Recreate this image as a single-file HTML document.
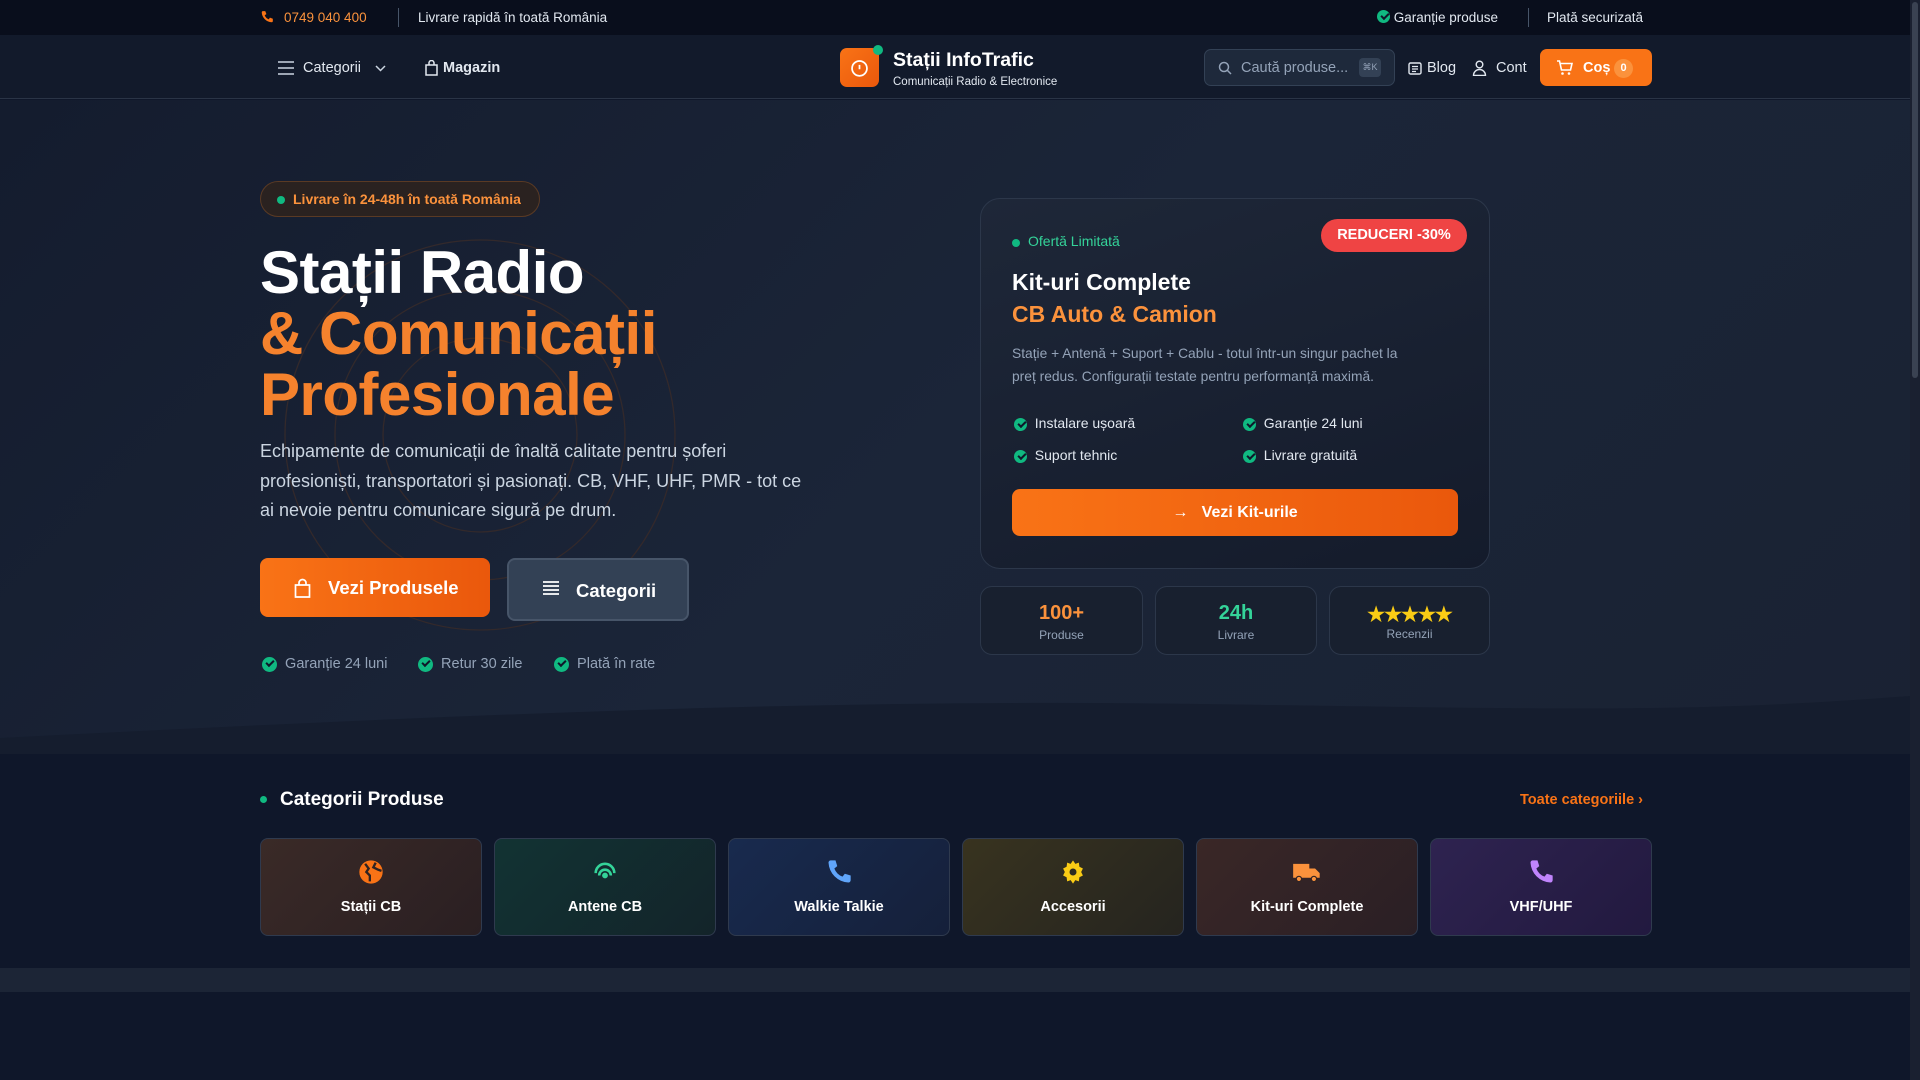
<!DOCTYPE html>
<html><head><meta charset="utf-8"><style>
*{box-sizing:border-box;margin:0;padding:0}
body{width:1920px;height:1080px;overflow:hidden;background:#0f172a;font-family:"Liberation Sans",sans-serif;color:#fff;position:relative}
.abs{position:absolute}
.top{left:0;top:0;width:1910px;height:35px;background:#090e1c;font-size:13.5px;color:#e2e8f0}
.nav{left:0;top:35px;width:1910px;height:64px;background:#121a2b;border-bottom:1px solid #2a3446}
.hero{left:0;top:100px;width:1910px;height:654px;background:linear-gradient(135deg,#141c2e 0%,#1b2538 50%,#1a2233 100%);overflow:hidden}
.sb{left:1910px;top:0;width:10px;height:1080px;background:#1a2030}
.sb i{position:absolute;left:2px;top:2px;width:6px;height:376px;background:#3a4252;border-radius:3px}
.chk{display:inline-block;width:15px;height:15px;border-radius:50%;background:#10b981;position:relative;vertical-align:middle}
.chk:after{content:"";position:absolute;left:4px;top:3px;width:6px;height:3px;border-left:2px solid #0f172a;border-bottom:2px solid #0f172a;transform:rotate(-45deg)}
.card{border:1px solid #2c374a;border-radius:20px;background:linear-gradient(160deg,#1e2738,#141b2b)}
.stat{top:586px;height:69px;border:1px solid #2c374a;border-radius:12px;background:#18202f;text-align:center}
.stat b{display:block;font-size:20px;margin-top:15px}
.stat span{display:block;font-size:12px;color:#94a3b8;margin-top:3px}
.cat{top:838px;width:222px;height:98px;border:1px solid #2f3a4e;border-radius:8px;text-align:center;font-size:14.5px;font-weight:bold}
.cat svg{display:block;margin:19px auto 13px}
</style></head><body>
<div class="abs top">
  <svg class="abs" style="left:260px;top:10px" width="14" height="14" viewBox="0 0 24 24"><path d="M5 2h4l2 5-3 2a12 12 0 0 0 7 7l2-3 5 2v4a2 2 0 0 1-2 2A18 18 0 0 1 3 4a2 2 0 0 1 2-2" fill="#f97316"/></svg>
  <span class="abs" style="left:284px;top:10px;color:#fb923c">0749 040 400</span>
  <span class="abs" style="left:398px;top:8px;width:1px;height:19px;background:#475569"></span>
  <span class="abs" style="left:418px;top:10px">Livrare rapidă în toată România</span>
  <span class="abs" style="left:1377px;top:10px"><span class="chk" style="width:13px;height:13px;margin-top:-3px"></span> Garanție produse</span>
  <span class="abs" style="left:1528px;top:8px;width:1px;height:19px;background:#475569"></span>
  <span class="abs" style="left:1547px;top:10px">Plată securizată</span>
</div>
<div class="abs nav">
  <svg class="abs" style="left:278px;top:26px" width="16" height="14" viewBox="0 0 16 14"><path d="M0 1h16M0 7h16M0 13h16" stroke="#cbd5e1" stroke-width="1.6"/></svg>
  <span class="abs" style="left:303px;top:25px;font-size:14.5px;color:#e2e8f0">Categorii</span>
  <svg class="abs" style="left:375px;top:30px" width="11" height="7" viewBox="0 0 11 7"><path d="M1 1l4.5 4.5L10 1" stroke="#cbd5e1" stroke-width="1.5" fill="none"/></svg>
  <svg class="abs" style="left:425px;top:25px" width="13" height="16" viewBox="0 0 13 16"><path d="M1 5h11v10H1zM4 5V3a2.5 2.5 0 0 1 5 0v2" stroke="#e2e8f0" stroke-width="1.5" fill="none"/></svg>
  <span class="abs" style="left:443px;top:25px;font-size:14.5px;font-weight:bold;color:#e2e8f0">Magazin</span>
  <div class="abs" style="left:840px;top:13px;width:39px;height:39px;border-radius:7px;background:linear-gradient(135deg,#f97316,#ea580c)"></div>
  <svg class="abs" style="left:849px;top:22px" width="21" height="21" viewBox="0 0 24 24"><circle cx="12" cy="13" r="8.5" stroke="#fff" stroke-width="2" fill="none"/><path d="M12 9v5" stroke="#fff" stroke-width="2"/></svg>
  <div class="abs" style="left:873px;top:10px;width:10px;height:10px;border-radius:50%;background:#10b981"></div>
  <span class="abs" style="left:893px;top:14px;font-size:19.5px;font-weight:bold">Stații InfoTrafic</span>
  <span class="abs" style="left:893px;top:41px;font-size:11.5px;color:#e2e8f0">Comunicații Radio &amp; Electronice</span>
  <div class="abs" style="left:1204px;top:14px;width:191px;height:37px;border:1px solid #334155;border-radius:7px;background:#1e293b"></div>
  <svg class="abs" style="left:1218px;top:26px" width="14" height="14" viewBox="0 0 14 14"><circle cx="6" cy="6" r="4.5" stroke="#94a3b8" stroke-width="1.5" fill="none"/><path d="M9.5 9.5L13 13" stroke="#94a3b8" stroke-width="1.5"/></svg>
  <span class="abs" style="left:1241px;top:25px;font-size:14.5px;color:#94a3b8">Caută produse...</span>
  <span class="abs" style="left:1359px;top:23px;width:22px;height:19px;border-radius:4px;background:#334155;font-size:9px;color:#94a3b8;text-align:center;line-height:19px">⌘K</span>
  <svg class="abs" style="left:1408px;top:27px" width="14" height="13" viewBox="0 0 14 13"><rect x="1" y="1" width="12" height="11" rx="1.5" stroke="#e2e8f0" stroke-width="1.4" fill="none"/><path d="M4 4.5h6M4 7h6M4 9.5h4" stroke="#e2e8f0" stroke-width="1.2"/></svg>
  <span class="abs" style="left:1427px;top:25px;font-size:14.5px;color:#e2e8f0">Blog</span>
  <svg class="abs" style="left:1472px;top:25px" width="15" height="16" viewBox="0 0 15 16"><circle cx="7.5" cy="4.5" r="3.3" stroke="#e2e8f0" stroke-width="1.4" fill="none"/><path d="M1.5 15.5a6 6 0 0 1 12 0z" stroke="#e2e8f0" stroke-width="1.4" fill="none"/></svg>
  <span class="abs" style="left:1496px;top:25px;font-size:14.5px;color:#e2e8f0">Cont</span>
  <div class="abs" style="left:1540px;top:14px;width:112px;height:37px;border-radius:7px;background:#f97316"></div>
  <svg class="abs" style="left:1556px;top:25px" width="17" height="16" viewBox="0 0 17 16"><path d="M1 1h2.5l2 9h9l1.5-6.5H4.3" stroke="#fff" stroke-width="1.6" fill="none"/><circle cx="6.5" cy="13.5" r="1.3" fill="#fff"/><circle cx="13" cy="13.5" r="1.3" fill="#fff"/></svg>
  <span class="abs" style="left:1583px;top:25px;font-size:14.5px;font-weight:bold">Coș</span>
  <span class="abs" style="left:1614px;top:24px;width:19px;height:19px;border-radius:50%;background:#fb923c;font-size:11px;text-align:center;line-height:19px;font-weight:bold">0</span>
</div>
<div class="abs hero">
  <svg class="abs" style="left:280px;top:135px" width="400" height="400" viewBox="0 0 400 400"><g fill="none" stroke="#33292b" stroke-width="1.3"><circle cx="200" cy="200" r="195"/><circle cx="200" cy="200" r="145"/><circle cx="200" cy="200" r="97"/></g></svg>
  <div class="abs" style="left:260px;top:81px;width:280px;height:36px;border:1px solid #5a3a24;border-radius:18px;background:#2a2220"></div>
  <span class="abs" style="left:277px;top:96px;width:8px;height:8px;border-radius:50%;background:#10b981"></span>
  <span class="abs" style="left:293px;top:91px;font-size:14px;font-weight:bold;color:#fb923c">Livrare în 24-48h în toată România</span>
  <div class="abs" style="left:260px;top:142px;font-size:60px;font-weight:bold;line-height:61px;letter-spacing:-0.5px">Stații Radio<br><span style="color:#f5822d">&amp; Comunicații<br>Profesionale</span></div>
  <div class="abs" style="left:260px;top:337px;white-space:nowrap;font-size:18px;line-height:29.5px;color:#cbd5e1">Echipamente de comunicații de înaltă calitate pentru șoferi<br>profesioniști, transportatori și pasionați. CB, VHF, UHF, PMR - tot ce<br>ai nevoie pentru comunicare sigură pe drum.</div>
  <div class="abs" style="left:260px;top:458px;width:230px;height:59px;border-radius:8px;background:linear-gradient(90deg,#f97316,#ea580c)"></div>
  <svg class="abs" style="left:294px;top:478px" width="17" height="20" viewBox="0 0 17 20"><path d="M1.5 7h14v12h-14zM5 7V5a3.5 3.5 0 0 1 7 0v2" stroke="#fff" stroke-width="1.7" fill="none"/></svg>
  <span class="abs" style="left:328px;top:477px;font-size:18.5px;font-weight:bold">Vezi Produsele</span>
  <div class="abs" style="left:507px;top:458px;width:182px;height:63px;border:2px solid #475569;border-radius:8px;background:#334155"></div>
  <svg class="abs" style="left:543px;top:481px" width="16" height="14" viewBox="0 0 16 14"><path d="M0 1h16M0 5h16M0 9h16M0 13h16" stroke="#fff" stroke-width="1.7"/></svg>
  <span class="abs" style="left:576px;top:480px;font-size:18.5px;font-weight:bold">Categorii</span>
  <span class="abs" style="left:262px;top:556px;font-size:14.5px;color:#94a3b8"><span class="chk"></span>&nbsp; Garanție 24 luni</span>
  <span class="abs" style="left:418px;top:556px;font-size:14.5px;color:#94a3b8"><span class="chk"></span>&nbsp; Retur 30 zile</span>
  <span class="abs" style="left:554px;top:556px;font-size:14.5px;color:#94a3b8"><span class="chk"></span>&nbsp; Plată în rate</span>

  <div class="abs card" style="left:980px;top:98px;width:510px;height:371px"></div>
  <span class="abs" style="left:1012px;top:139px;width:8px;height:8px;border-radius:50%;background:#10b981"></span>
  <span class="abs" style="left:1028px;top:133px;font-size:14px;color:#34d399">Ofertă Limitată</span>
  <div class="abs" style="left:1321px;top:119px;width:146px;height:33px;border-radius:17px;background:#ef4444;font-size:14.5px;font-weight:bold;text-align:center;line-height:33px">REDUCERI -30%</div>
  <span class="abs" style="left:1012px;top:169px;font-size:23px;font-weight:bold">Kit-uri Complete</span>
  <span class="abs" style="left:1012px;top:201px;font-size:23px;font-weight:bold;color:#fb923c">CB Auto &amp; Camion</span>
  <div class="abs" style="left:1012px;top:242px;white-space:nowrap;font-size:13.8px;line-height:23px;color:#94a3b8">Stație + Antenă + Suport + Cablu - totul într-un singur pachet la<br>preț redus. Configurații testate pentru performanță maximă.</div>
  <span class="abs" style="left:1014px;top:315px;font-size:14px;color:#e2e8f0"><span class="chk" style="width:13px;height:13px"></span>&nbsp; Instalare ușoară</span>
  <span class="abs" style="left:1243px;top:315px;font-size:14px;color:#e2e8f0"><span class="chk" style="width:13px;height:13px"></span>&nbsp; Garanție 24 luni</span>
  <span class="abs" style="left:1014px;top:347px;font-size:14px;color:#e2e8f0"><span class="chk" style="width:13px;height:13px"></span>&nbsp; Suport tehnic</span>
  <span class="abs" style="left:1243px;top:347px;font-size:14px;color:#e2e8f0"><span class="chk" style="width:13px;height:13px"></span>&nbsp; Livrare gratuită</span>
  <div class="abs" style="left:1012px;top:389px;width:446px;height:47px;border-radius:8px;background:linear-gradient(90deg,#f97316,#ea580c);text-align:center;line-height:47px;font-size:16px;font-weight:bold">→&nbsp;&nbsp; Vezi Kit-urile</div>
  <div class="abs stat" style="left:980px;top:486px;width:163px"><b style="color:#fb923c">100+</b><span>Produse</span></div>
  <div class="abs stat" style="left:1155px;top:486px;width:162px"><b style="color:#34d399">24h</b><span>Livrare</span></div>
  <div class="abs stat" style="left:1329px;top:486px;width:161px"><b style="color:#facc15;letter-spacing:-1px">★★★★★</b><span style="margin-top:0">Recenzii</span></div>
  <svg class="abs" style="left:0;top:594px" width="1910" height="60" viewBox="0 0 1910 60" preserveAspectRatio="none"><path d="M0 60V44C400 24 800 4 1200 10S1700 18 1910 2V60z" fill="#151d2e"/></svg>
</div>
<span class="abs" style="left:260px;top:796px;width:7px;height:7px;border-radius:50%;background:#10b981"></span>
<span class="abs" style="left:280px;top:789px;font-size:19px;font-weight:bold">Categorii Produse</span>
<span class="abs" style="left:1520px;top:792px;font-size:14.5px;font-weight:bold;color:#f97316">Toate categoriile ›</span>
<div class="abs cat" style="left:260px;background:linear-gradient(135deg,#3a2a27,#2a1f22)"><svg width="28" height="28" viewBox="0 0 24 24"><circle cx="12" cy="12" r="10" fill="#f97316"/><path d="M7 5l3 4-2 3 3 3v5M16 4l-2 4 4 2 3 1" stroke="#2f2322" stroke-width="2" fill="none"/></svg>Stații CB</div>
<div class="abs cat" style="left:494px;background:linear-gradient(135deg,#123333,#13242a)"><svg width="28" height="28" viewBox="0 0 24 24"><circle cx="12" cy="15" r="2.5" fill="#34d399"/><path d="M7 15a5 5 0 0 1 10 0M4 13a8 8 0 0 1 16 0" stroke="#34d399" stroke-width="2.2" fill="none"/></svg>Antene CB</div>
<div class="abs cat" style="left:728px;background:linear-gradient(135deg,#182a4e,#15203a)"><svg width="28" height="28" viewBox="0 0 24 24"><path d="M5 2h4l1.5 5-2.5 2a12 12 0 0 0 7 7l2-2.5 5 1.5v4a2 2 0 0 1-2 2A18 18 0 0 1 3 4a2 2 0 0 1 2-2" fill="#60a5fa"/></svg>Walkie Talkie</div>
<div class="abs cat" style="left:962px;background:linear-gradient(135deg,#38331f,#25241f)"><svg width="28" height="28" viewBox="0 0 24 24"><path d="M12 2l2 3 3-1 .5 3.5 3 1.5-1.5 3 1.5 3-3 1.5L17 20l-3-1-2 3-2-3-3 1-.5-3.5-3-1.5L5 12 3.5 9l3-1.5L7 4l3 1z" fill="#facc15"/><circle cx="12" cy="12" r="3" fill="#2e2b20"/></svg>Accesorii</div>
<div class="abs cat" style="left:1196px;background:linear-gradient(135deg,#3a2726,#2a1f25)"><svg width="30" height="28" viewBox="0 0 26 24"><path d="M1 5h14v12H1zM15 9h5l4 4v4h-9z" fill="#fb923c"/><circle cx="6" cy="18" r="2.3" fill="#fb923c" stroke="#2f2224"/><circle cx="19" cy="18" r="2.3" fill="#fb923c" stroke="#2f2224"/></svg>Kit-uri Complete</div>
<div class="abs cat" style="left:1430px;width:222px;background:linear-gradient(135deg,#2e2350,#22193f)"><svg width="28" height="28" viewBox="0 0 24 24"><path d="M5 2h4l1.5 5-2.5 2a12 12 0 0 0 7 7l2-2.5 5 1.5v4a2 2 0 0 1-2 2A18 18 0 0 1 3 4a2 2 0 0 1 2-2" fill="#c084fc"/></svg>VHF/UHF</div>
<div class="abs" style="left:0;top:968px;width:1910px;height:24px;background:#1c2536"></div>
<div class="abs sb"><i></i></div>
</body></html>
